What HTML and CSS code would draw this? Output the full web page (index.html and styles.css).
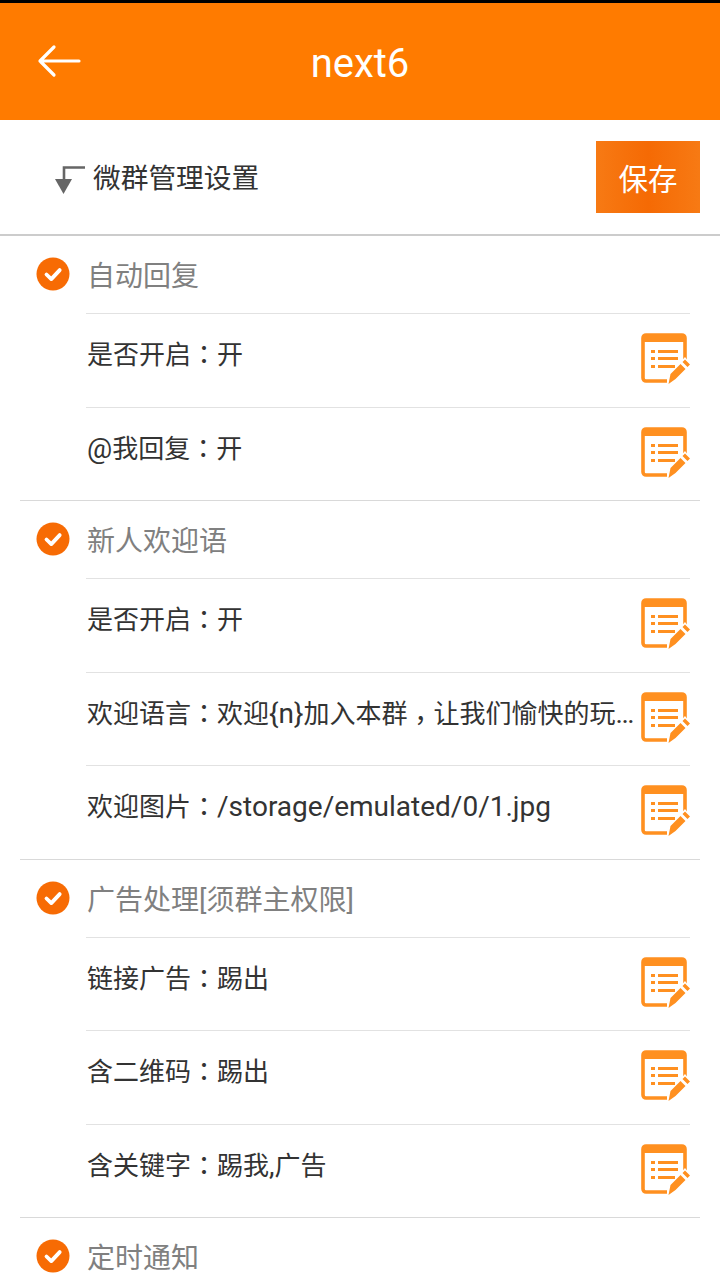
FILE: index.html
```html
<!DOCTYPE html>
<html lang="zh">
<head>
<meta charset="utf-8">
<title>next6</title>
<link rel="stylesheet" href="styles.css">
</head>
<body>
<svg class="defs" width="0" height="0" aria-hidden="true">
  <symbol id="check" viewBox="0 0 34 34">
    <circle cx="17" cy="17" r="16.500" fill="#f76b04"/>
    <path d="M10.500 17.500l4.800 4.600 8.400-9" fill="none" stroke="#fff" stroke-width="3.800" stroke-linecap="round" stroke-linejoin="round"/>
  </symbol>
  <symbol id="edit" viewBox="0 0 52 54">
    <path d="M45 30V5a3 3 0 0 0-3-3H6a3 3 0 0 0-3 3v40a3 3 0 0 0 3 3h21" fill="none" stroke="#ff9020" stroke-width="3.600"/>
    <path d="M2 5a3 3 0 0 1 3-3h38a3 3 0 0 1 3 3v4H2z" fill="#ff9020"/>
    <path d="M11 17h4v3h-4zM11 24h4v3h-4zM11 32h4v3h-4zM18 17h20v3H18zM18 24h20v3H18zM18 32h17v3H18z" fill="#ff9020"/>
    <path d="M45 24l7 9-14 17-11 3 2-11z" fill="#fff"/>
    <path d="M45 26.500l5 5-2.500 2.500-5-5zM40.500 31l5 5-10 10-7 5 2-10z" fill="#ff9020"/>
  </symbol>
</svg>
<header class="appbar">
  <svg class="back" width="44" height="34" viewBox="0 0 44 34" aria-hidden="true"><path d="M42 17H3M17 3L3 17l14 14" fill="none" stroke="#fff" stroke-width="3.200" stroke-linecap="round" stroke-linejoin="round"/></svg>
  <h1 class="title">next6</h1>
</header>
<div class="toolbar">
  <div class="toolbar-label">
    <svg class="sort" width="32" height="30" viewBox="0 0 32 30" aria-hidden="true"><path d="M31 2.500H10V16" fill="none" stroke="#666" stroke-width="2.600"/><path d="M1 14h17l-8.500 15z" fill="#666"/></svg>
    <span>微群管理设置</span>
  </div>
  <button class="save">保存</button>
</div>
<main>
  <section class="group">
    <div class="group-head"><svg class="tick"><use href="#check"/></svg><span>自动回复</span></div>
    <div class="row"><span class="row-text">是否开启<span class="punct" lang="zh-Hant">：</span>开</span><svg class="edit"><use href="#edit"/></svg></div>
    <div class="row"><span class="row-text"><span class="latin">@</span>我回复<span class="punct" lang="zh-Hant">：</span>开</span><svg class="edit"><use href="#edit"/></svg></div>
  </section>
  <section class="group">
    <div class="group-head"><svg class="tick"><use href="#check"/></svg><span>新人欢迎语</span></div>
    <div class="row"><span class="row-text">是否开启<span class="punct" lang="zh-Hant">：</span>开</span><svg class="edit"><use href="#edit"/></svg></div>
    <div class="row"><span class="row-text">欢迎语言<span class="punct" lang="zh-Hant">：</span>欢迎<span class="latin">{n}</span>加入本群<span class="punct comma" lang="zh-Hant">，</span>让我们愉快的玩<span class="dots">...</span></span><svg class="edit"><use href="#edit"/></svg></div>
    <div class="row"><span class="row-text">欢迎图片<span class="punct" lang="zh-Hant">：</span><span class="latin">/storage/emulated/0/1.jpg</span></span><svg class="edit"><use href="#edit"/></svg></div>
  </section>
  <section class="group">
    <div class="group-head"><svg class="tick"><use href="#check"/></svg><span>广告处理[须群主权限]</span></div>
    <div class="row"><span class="row-text">链接广告<span class="punct" lang="zh-Hant">：</span>踢出</span><svg class="edit"><use href="#edit"/></svg></div>
    <div class="row"><span class="row-text">含二维码<span class="punct" lang="zh-Hant">：</span>踢出</span><svg class="edit"><use href="#edit"/></svg></div>
    <div class="row"><span class="row-text">含关键字<span class="punct" lang="zh-Hant">：</span>踢我<span class="latin">,</span>广告</span><svg class="edit"><use href="#edit"/></svg></div>
  </section>
  <section class="group">
    <div class="group-head"><svg class="tick"><use href="#check"/></svg><span>定时通知</span></div>
  </section>
</main>
</body>
</html>
```
FILE: styles.css
```css
* { box-sizing: border-box; }
html, body { margin: 0; padding: 0; }
body {
  width: 720px;
  height: 1280px;
  overflow: hidden;
  background: #fff;
  font-family: Roboto, "Noto Sans CJK SC", sans-serif;
  color: #333;
}
.defs { display: block; height: 0; }
.appbar {
  height: 120px;
  border-top: 3px solid #000;
  background: #ff7b00;
  display: flex;
  align-items: center;
  justify-content: center;
  position: relative;
}
.back { position: absolute; left: 37px; top: 41px; }
.title {
  margin: 4px 0 0;
  font-size: 40px;
  font-weight: 400;
  color: #fff;
  line-height: 1;
}
.toolbar {
  height: 116px;
  border-bottom: 2px solid #ccc;
  display: flex;
  align-items: center;
  justify-content: space-between;
  padding: 0 20px 0 54px;
}
.toolbar-label {
  display: flex;
  align-items: center;
  gap: 7px;
  font-size: 27.700px;
  margin-top: -2px;
  color: #333;
}
.sort { margin-top: 7px; }
.save {
  width: 104px;
  height: 72px;
  border: 0;
  padding: 0;
  background: linear-gradient(90deg, #f77a14, #f56a04 50%, #f77a14);
  color: #fff;
  font: 400 29.500px "Noto Sans CJK SC", sans-serif;
}
.group { border-bottom: 1px solid #d9d9d9; margin: 0 20px; }
.group-head {
  height: 77px;
  display: flex;
  align-items: center;
  gap: 17px;
  padding: 0 0 1px 16px;
  font-size: 28px;
  color: #808080;
}
.tick { width: 34px; height: 34px; flex: none; }
.row {
  height: 93.500px;
  margin: 0 10px 0 66px;
  border-top: 1px solid #e2e2e2;
  display: flex;
  align-items: center;
  justify-content: space-between;
  font-size: 26px;
  color: #333;
}
.row-text {
  flex: 1;
  min-width: 0;
  white-space: nowrap;
  line-height: 36px;
  padding: 0 0 12px 1px;
}
.latin { font-size: 28px; }
.dots { font-size: 28px; letter-spacing: -1.500px; }
.punct { font-family: "Noto Sans CJK TC", sans-serif; }
.comma { vertical-align: -7px; line-height: 1; }
.edit { width: 52px; height: 54px; flex: none; margin-right: -2px; }
```
